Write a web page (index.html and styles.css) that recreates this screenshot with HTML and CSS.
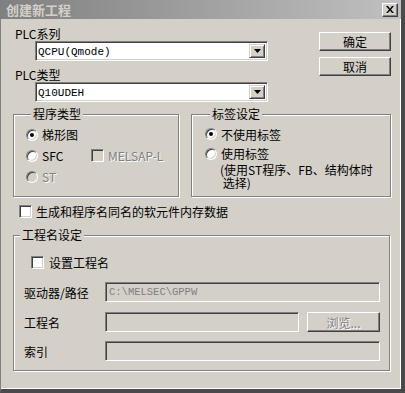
FILE: index.html
```html
<!DOCTYPE html>
<html lang="zh-CN">
<head>
  <meta charset="UTF-8" />
  <title>创建新工程</title>
  <link rel="stylesheet" href="styles.css">
</head>
<body>
  <div class="window">
    <div class="titlebar">
      <span class="title">创建新工程</span>
      <span class="close-btn">
        <svg width="8" height="7" viewBox="0 0 8 7"><path d="M0 0h2l2 2.5 2-2.5h2l-3 3.5 3 3.5h-2l-2-2.5-2 2.5h-2l3-3.5z" fill="#000"/></svg>
      </span>
    </div>

    <div class="client">
      <div class="top">
        <div class="plc">
          <div class="lbl">PLC系列</div>
          <div class="combo">
            <span class="combo-text">QCPU(Qmode)</span>
            <span class="combo-btn"><svg width="7" height="4" viewBox="0 0 7 4"><path d="M0 0h7l-3.5 4z" fill="#000"/></svg></span>
          </div>
          <div class="lbl lbl-2">PLC类型</div>
          <div class="combo">
            <span class="combo-text">Q10UDEH</span>
            <span class="combo-btn"><svg width="7" height="4" viewBox="0 0 7 4"><path d="M0 0h7l-3.5 4z" fill="#000"/></svg></span>
          </div>
        </div>
        <div class="actions">
          <button class="btn">确定</button>
          <button class="btn">取消</button>
        </div>
      </div>

      <div class="groups">
        <fieldset class="group prog">
          <legend>程序类型</legend>
          <div class="opt"><span class="radio on"></span><span>梯形图</span></div>
          <div class="opt">
            <span class="radio"></span><span class="sfc">SFC</span>
            <span class="chk off"></span><span class="dis">MELSAP-L</span>
          </div>
          <div class="opt"><span class="radio off"></span><span class="dis">ST</span></div>
        </fieldset>

        <fieldset class="group tags">
          <legend>标签设定</legend>
          <div class="opt"><span class="radio on"></span><span>不使用标签</span></div>
          <div class="opt opt-2"><span class="radio"></span><span>使用标签</span></div>
          <div class="note">(使用ST程序、FB、结构体时<br>&nbsp;选择)</div>
        </fieldset>
      </div>

      <div class="opt check-row"><span class="chk"></span><span>生成和程序名同名的软元件内存数据</span></div>

      <fieldset class="group project">
        <legend>工程名设定</legend>
        <div class="opt name-check"><span class="chk"></span><span>设置工程名</span></div>
        <div class="field">
          <span class="field-lbl">驱动器/路径</span>
          <span class="edit wide path">C:\MELSEC\GPPW</span>
        </div>
        <div class="field">
          <span class="field-lbl">工程名</span>
          <span class="edit short"></span>
          <button class="btn browse">浏览...</button>
        </div>
        <div class="field last">
          <span class="field-lbl">索引</span>
          <span class="edit wide"></span>
        </div>
      </fieldset>
    </div>
  </div>
</body>
</html>
```

FILE: styles.css
```css
body {
  margin: 0;
  font-family: "Noto Sans CJK SC", sans-serif;
  font-size: 12px;
  color: #000;
  background: #d4d0c8;
}
.window {
  width: 405px;
  height: 393px;
  box-sizing: border-box;
  background: #d4d0c8;
  border-left: 1px solid #808080;
  border-right: 4px solid #4a4a4a;
  border-bottom: 4px solid #4a4a4a;
  box-shadow: inset -1px -1px 0 #fff;
}
.titlebar {
  height: 19px;
  display: flex;
  align-items: center;
  justify-content: space-between;
  padding: 0 3px 0 5px;
  background: linear-gradient(to right, #808080, #c0c0c0);
}
.title {
  color: #d4d0c8;
  font-weight: bold;
  font-size: 13px;
  line-height: 19px;
}
.close-btn {
  width: 16px;
  height: 14px;
  box-sizing: border-box;
  display: flex;
  align-items: center;
  justify-content: center;
  background: #d4d0c8;
  border: 1px solid;
  border-color: #fff #404040 #404040 #fff;
  box-shadow: inset -1px -1px 0 #808080;
}

.client { padding-left: 12px; }

/* top: plc selection + buttons */
.top { display: flex; }
.plc { width: 270px; }
.lbl {
  line-height: 14px;
  margin: 8px 0 0 2px;
}
.lbl-2 { margin-top: 7px; }
.combo {
  width: 233px;
  height: 20px;
  box-sizing: border-box;
  margin-left: 22px;
  display: flex;
  background: #fff;
  border: 1px solid;
  border-color: #808080 #fff #fff #808080;
  box-shadow: inset 1px 1px 0 #404040, inset -1px -1px 0 #d4d0c8;
  padding: 2px;
}
.combo-text {
  flex: 1;
  font-family: "Liberation Mono", monospace;
  font-size: 11px;
  line-height: 16px;
}
.combo-btn {
  width: 16px;
  box-sizing: border-box;
  display: flex;
  align-items: center;
  justify-content: center;
  background: #d4d0c8;
  border: 1px solid;
  border-color: #d4d0c8 #404040 #404040 #d4d0c8;
  box-shadow: inset 1px 1px 0 #fff, inset -1px -1px 0 #808080;
}
.actions {
  margin: 13px 0 0 36px;
  display: flex;
  flex-direction: column;
  gap: 6px;
}
.btn {
  font-family: inherit;
  font-size: 12px;
  background: #d4d0c8;
  border: 1px solid;
  border-color: #fff #404040 #404040 #fff;
  box-shadow: inset -1px -1px 0 #808080;
  padding: 0;
  margin: 0;
}
.actions .btn {
  width: 72px;
  height: 19px;
  line-height: 16px;
}

/* group boxes */
.group {
  margin: 0;
  padding: 0;
  border: 1px solid #808080;
  box-shadow: inset 1px 1px 0 #fff, 1px 1px 0 #fff;
}
.group legend {
  padding: 0 2px;
  margin-left: 5px;
  line-height: 14px;
  background: #d4d0c8;
}
.groups {
  display: flex;
  gap: 12px;
  margin-top: 5px;
}
.prog {
  width: 166px;
  box-sizing: border-box;
  padding: 3px 0 8px 12px;
}
.tags {
  width: 200px;
  box-sizing: border-box;
  padding: 3px 0 7px 13px;
}
.opt {
  display: flex;
  align-items: center;
  height: 21px;
}
.tags .opt { height: 20px; }
.tags .opt-2 { height: 19px; }
.note {
  margin-left: 15px;
  line-height: 13px;
}

.radio {
  width: 12px;
  height: 12px;
  box-sizing: border-box;
  border-radius: 50%;
  border: 1px solid;
  border-color: #808080 #fff #fff #808080;
  box-shadow: inset 1px 1px 0 #404040, inset -1px -1px 0 #d4d0c8;
  background: #fff;
  margin-right: 4px;
  display: flex;
  align-items: center;
  justify-content: center;
}
.radio.on::after {
  content: "";
  width: 4px;
  height: 4px;
  border-radius: 50%;
  background: #000;
}
.radio.off { background: #d4d0c8; }

.chk {
  width: 13px;
  height: 13px;
  box-sizing: border-box;
  border: 1px solid;
  border-color: #808080 #fff #fff #808080;
  box-shadow: inset 1px 1px 0 #404040, inset -1px -1px 0 #d4d0c8;
  background: #fff;
  margin-right: 4px;
}
.chk.off { background: #d4d0c8; }
.sfc { width: 49px; }
.dis {
  color: #808080;
  text-shadow: 1px 1px 0 #fff;
}

.check-row {
  height: 20px;
  margin: 4px 0 0 6px;
}

/* project name group */
.project {
  width: 377px;
  box-sizing: border-box;
  margin-top: 7px;
  padding: 10px 0 9px 0;
}
.project legend { margin-left: 6px; }
.name-check {
  height: 20px;
  padding-left: 17px;
}
.name-check .chk { margin-right: 5px; }
.field {
  display: flex;
  align-items: center;
  height: 20px;
  margin-top: 10px;
  padding-left: 10px;
}
.field.last { margin-top: 9px; }
.field-lbl { width: 81px; }
.edit {
  height: 20px;
  box-sizing: border-box;
  border: 1px solid;
  border-color: #808080 #fff #fff #808080;
  box-shadow: inset 1px 1px 0 #404040, inset -1px -1px 0 #d4d0c8;
  background: #d4d0c8;
  padding: 0 3px;
}
.wide { width: 275px; }
.short { width: 194px; }
.path {
  color: #808080;
  font-family: "Liberation Mono", monospace;
  font-size: 10.5px;
  line-height: 18px;
}
.browse {
  width: 73px;
  height: 20px;
  margin-left: 8px;
  color: #808080;
  text-shadow: 1px 1px 0 #fff;
}
```
